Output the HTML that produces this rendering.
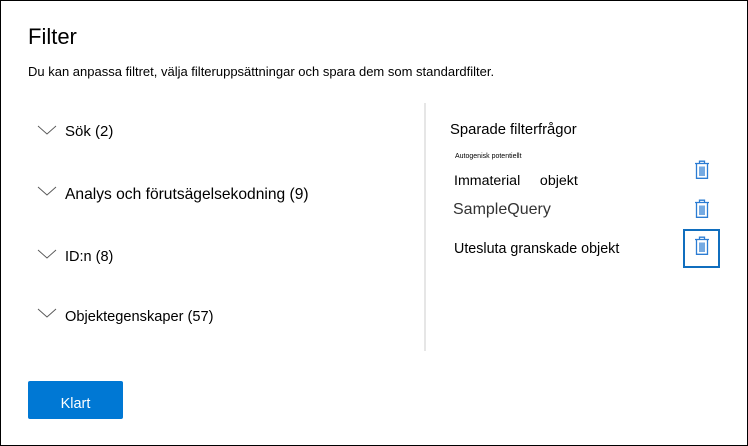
<!DOCTYPE html>
<html><head><meta charset="utf-8"><style>
*{margin:0;padding:0;box-sizing:border-box}
body{width:748px;height:446px;background:#fff;font-family:"Liberation Sans",sans-serif;color:#000;position:relative;overflow:hidden}
.frame{position:absolute;left:0;top:0;width:748px;height:446px;border:1px solid #000}
.a{position:absolute;white-space:nowrap}
.chev{position:absolute;width:20px;height:12px}
.div{position:absolute;left:424px;top:103px;width:2px;height:248px;background:#e6e6e6}
.btn{position:absolute;left:28px;top:381px;width:95px;height:38px;background:#0078d4;border-radius:2px;color:#fff;font-size:14.5px;text-align:center;line-height:46px}
.trash{position:absolute;width:16px;height:20px}
.focus{position:absolute;left:683px;top:229px;width:37px;height:39px;border:2px solid #106ebe}
</style></head><body>
<div class="frame"></div>
<div class="a" style="left:28px;top:24px;font-size:22px">Filter</div>
<div class="a" style="left:28px;top:64px;font-size:13px">Du kan anpassa filtret, välja filteruppsättningar och spara dem som standardfilter.</div>

<svg class="chev" style="left:37px;top:125px" viewBox="0 0 20 12"><path d="M1 1 L10 9 L19 1" fill="none" stroke="#555" stroke-width="0.9"/></svg>
<div class="a" style="left:65px;top:123px;font-size:15px">Sök (2)</div>
<svg class="chev" style="left:37px;top:186px" viewBox="0 0 20 12"><path d="M1 1 L10 9 L19 1" fill="none" stroke="#555" stroke-width="0.9"/></svg>
<div class="a" style="left:65px;top:186px;font-size:15.6px">Analys och förutsägelsekodning (9)</div>
<svg class="chev" style="left:37px;top:249px" viewBox="0 0 20 12"><path d="M1 1 L10 9 L19 1" fill="none" stroke="#555" stroke-width="0.9"/></svg>
<div class="a" style="left:65px;top:249px;font-size:14.5px">ID:n (8)</div>
<svg class="chev" style="left:37px;top:308px" viewBox="0 0 20 12"><path d="M1 1 L10 9 L19 1" fill="none" stroke="#555" stroke-width="0.9"/></svg>
<div class="a" style="left:65px;top:309px;font-size:14.6px">Objektegenskaper (57)</div>

<div class="div"></div>

<div class="a" style="left:450px;top:122px;font-size:14.8px">Sparade filterfrågor</div>
<div class="a" style="left:455px;top:153px;font-size:7px">Autogenisk potentiellt</div>
<div class="a" style="left:454px;top:173px;font-size:14.2px">Immaterial&nbsp;&nbsp;&nbsp;&nbsp;&nbsp;objekt</div>
<div class="a" style="left:453px;top:201px;font-size:16px;color:#333">SampleQuery</div>
<div class="a" style="left:454px;top:241px;font-size:14.3px">Utesluta granskade objekt</div>

<svg class="trash" style="left:694px;top:160px" viewBox="0 0 16 20"><g fill="none" stroke="#2b7cd3" stroke-width="1.3"><path d="M5.5 3V1.2h5V3M1 3.5h14M2.5 4v14.3h11V4M6 6.5v9.5M8 6.5v9.5M10 6.5v9.5"/></g></svg>
<svg class="trash" style="left:694px;top:199px" viewBox="0 0 16 20"><g fill="none" stroke="#2b7cd3" stroke-width="1.3"><path d="M5.5 3V1.2h5V3M1 3.5h14M2.5 4v14.3h11V4M6 6.5v9.5M8 6.5v9.5M10 6.5v9.5"/></g></svg>
<div class="focus"></div>
<svg class="trash" style="left:694px;top:236px" viewBox="0 0 16 20"><g fill="none" stroke="#2b7cd3" stroke-width="1.3"><path d="M5.5 3V1.2h5V3M1 3.5h14M2.5 4v14.3h11V4M6 6.5v9.5M8 6.5v9.5M10 6.5v9.5"/></g></svg>

<div class="btn">Klart</div>
</body></html>
